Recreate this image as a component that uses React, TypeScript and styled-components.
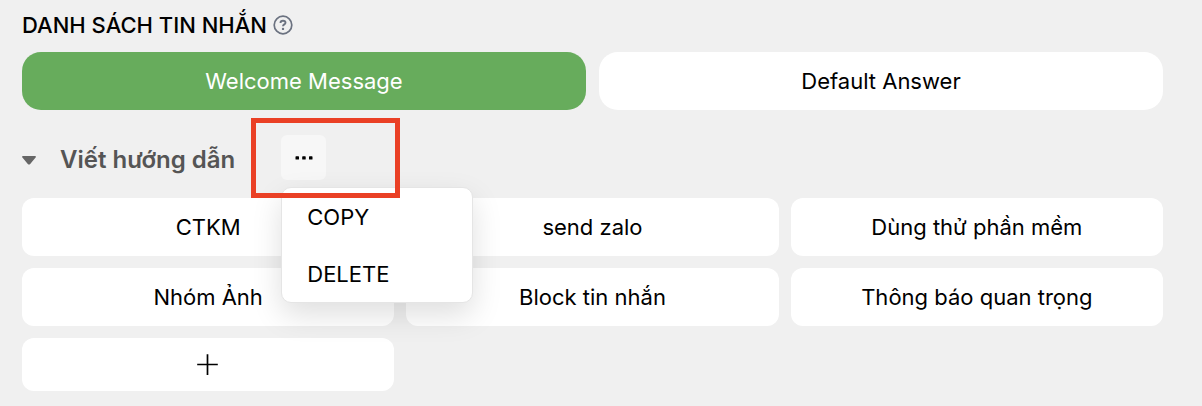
import React, { useState } from "react";
import styled, { createGlobalStyle } from "styled-components";

const GlobalStyle = createGlobalStyle`
  *, *::before, *::after {
    box-sizing: border-box;
  }
  body {
    margin: 0;
    background: #f0f0f0;
    color: #000;
    font-family: Inter, "Liberation Sans", sans-serif;
    font-size: 22px;
    line-height: 32px;
  }
  button {
    border: 0;
    padding: 0;
    font: inherit;
    color: inherit;
    cursor: pointer;
  }
`;

const Page = styled.main`
  padding: 9px 39px 15px 22px;
`;

const TitleRow = styled.header`
  display: flex;
  align-items: center;
  gap: 6px;
  margin-bottom: 11px;
`;

const Title = styled.h1`
  margin: 0;
  font-size: 22px;
  font-weight: 500;
  line-height: 32px;
`;

const HelpButton = styled.button`
  display: flex;
  background: none;
  color: #6b7280;
`;

const Tabs = styled.div`
  display: grid;
  grid-template-columns: repeat(2, 1fr);
  gap: 13px;
`;

const Tab = styled.button<{ $active: boolean }>`
  height: 58px;
  border-radius: 19px;
  background: ${(p) => (p.$active ? "#67ac5c" : "#fff")};
  color: ${(p) => (p.$active ? "#fff" : "#000")};
`;

const GroupHeader = styled.div`
  display: flex;
  align-items: center;
  padding: 25px 0 18px;
`;

const GroupToggle = styled.button`
  display: flex;
  align-items: center;
  gap: 24px;
  padding-top: 4px;
  background: none;
  color: #555;
`;

const GroupName = styled.span`
  font-size: 24px;
  font-weight: 600;
`;

const MenuAnchor = styled.div`
  position: relative;
  margin-left: 46px;
`;

const MoreButton = styled.button`
  display: flex;
  align-items: center;
  justify-content: center;
  width: 45px;
  height: 45px;
  border-radius: 6px;
  background: #f7f7f7;
`;

const Menu = styled.div`
  position: absolute;
  z-index: 1;
  top: 52px;
  left: 0;
  display: flex;
  flex-direction: column;
  width: 192px;
  border: 1px solid #e5e5e5;
  border-radius: 10px;
  background: #fff;
  box-shadow: 0 12px 30px rgba(0, 0, 0, 0.13);
`;

const MenuItem = styled.button`
  height: 57px;
  padding: 0 25px;
  background: none;
  text-align: left;
`;

const Highlight = styled.div`
  position: absolute;
  z-index: 2;
  top: -17px;
  left: -30px;
  width: 149px;
  height: 80px;
  border: 5px solid #ea4025;
  pointer-events: none;
`;

const BlockGrid = styled.div`
  display: grid;
  grid-template-columns: repeat(3, 1fr);
  gap: 12px;
`;

const Block = styled.button`
  height: 58px;
  border-radius: 12px;
  background: #fff;
`;

const AddBlock = styled(Block)`
  display: flex;
  align-items: center;
  justify-content: center;
  height: 53px;
`;

const tabs = ["Welcome Message", "Default Answer"];

const blocks = [
  "CTKM",
  "send zalo",
  "Dùng thử phần mềm",
  "Nhóm Ảnh",
  "Block tin nhắn",
  "Thông báo quan trọng",
];

function HelpIcon() {
  return (
    <svg width="20" height="20" viewBox="0 0 20 20" fill="none" stroke="currentColor" aria-hidden="true">
      <circle cx="10" cy="10" r="8.8" strokeWidth="1.7" />
      <path d="M7.500 7.900c0-1.400 1.100-2.200 2.500-2.200s2.500.8 2.500 2c0 1.700-2.500 1.700-2.500 3.500" strokeWidth="1.900" />
      <circle cx="10" cy="13.900" r="1.200" fill="currentColor" stroke="none" />
    </svg>
  );
}

function CaretIcon() {
  return (
    <svg width="14" height="10" viewBox="0 0 14 10" fill="#666" aria-hidden="true">
      <path d="M1 1h12c1 0 1.2.8.6 1.5L8.2 8.900a1.600 1.600 0 0 1-2.400 0L.4 2.500C-.2 1.800 0 1 1 1z" />
    </svg>
  );
}

function DotsIcon() {
  return (
    <svg width="18" height="4" viewBox="0 0 18 4" fill="#000" aria-hidden="true">
      <rect x="0.500" y="0.300" width="3.500" height="3.300" rx="0.600" />
      <rect x="7.200" y="0.300" width="3.500" height="3.300" rx="0.600" />
      <rect x="14" y="0.300" width="3.500" height="3.300" rx="0.600" />
    </svg>
  );
}

function PlusIcon() {
  return (
    <svg width="22" height="22" viewBox="0 0 22 22" stroke="#000" strokeWidth="1.700" aria-hidden="true">
      <path d="M10.500 .3v20.600M.2 10.500h20.600" />
    </svg>
  );
}

export default function App() {
  const [active, setActive] = useState(tabs[0]);
  const [open, setOpen] = useState(true);
  const [menuOpen, setMenuOpen] = useState(true);

  return (
    <>
      <GlobalStyle />
      <Page lang="vi">
        <TitleRow>
          <Title>DANH SÁCH TIN NHẮN</Title>
          <HelpButton type="button" aria-label="Trợ giúp">
            <HelpIcon />
          </HelpButton>
        </TitleRow>
        <Tabs>
          {tabs.map((name) => (
            <Tab key={name} type="button" $active={name === active} aria-pressed={name === active} onClick={() => setActive(name)}>
              {name}
            </Tab>
          ))}
        </Tabs>
        <GroupHeader>
          <GroupToggle type="button" aria-expanded={open} onClick={() => setOpen(!open)}>
            <CaretIcon />
            <GroupName>Viết hướng dẫn</GroupName>
          </GroupToggle>
          <MenuAnchor>
            <MoreButton type="button" aria-label="Tùy chọn" aria-expanded={menuOpen} onClick={() => setMenuOpen(!menuOpen)}>
              <DotsIcon />
            </MoreButton>
            {menuOpen && (
              <Menu role="menu">
                <MenuItem type="button" role="menuitem">COPY</MenuItem>
                <MenuItem type="button" role="menuitem">DELETE</MenuItem>
              </Menu>
            )}
            <Highlight />
          </MenuAnchor>
        </GroupHeader>
        {open && (
          <BlockGrid>
            {blocks.map((name) => (
              <Block key={name} type="button">{name}</Block>
            ))}
            <AddBlock type="button" aria-label="Thêm">
              <PlusIcon />
            </AddBlock>
          </BlockGrid>
        )}
      </Page>
    </>
  );
}
